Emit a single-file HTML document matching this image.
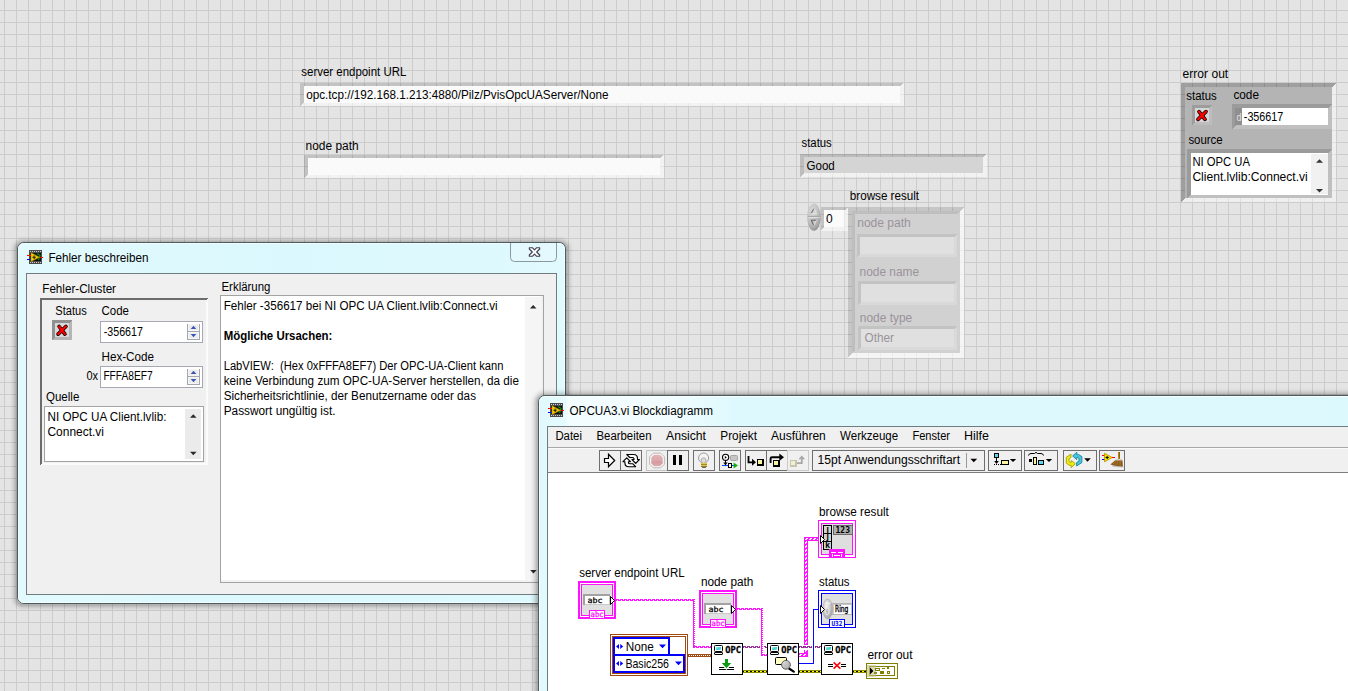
<!DOCTYPE html>
<html lang="de">
<head>
<meta charset="utf-8">
<title>OPCUA3.vi</title>
<style>
html,body{margin:0;padding:0;background:#e4e4e4;overflow:hidden}
svg{display:block;font-family:"Liberation Sans",sans-serif;shape-rendering:crispEdges}
text{white-space:pre}
</style>
</head>
<body>
<svg width="1348" height="691" viewBox="0 0 1348 691">
<g id="front-panel">
<defs><pattern id="grid" x="4" y="10" width="12" height="12" patternUnits="userSpaceOnUse"><rect x="0" y="0" width="12" height="12" fill="#e4e4e4"/><rect x="0" y="0" width="1" height="12" fill="#cccccc"/><rect x="0" y="0" width="12" height="1" fill="#cccccc"/></pattern></defs>
<rect x="0" y="0" width="1348" height="691" fill="url(#grid)"/>
<text x="301.3" y="76" font-size="12" fill="#000" textLength="105" lengthAdjust="spacingAndGlyphs" >server endpoint URL</text>
<path fill="#000" fill-opacity="0.145" d="M300 83H904L900 86H304V103L300 106Z"/>
<path fill="#fff" fill-opacity="0.52" d="M904 106H300L304 103H900V86L904 83Z"/>
<rect x="304" y="86" width="596" height="17" fill="#fafafa" />
<text x="306.2" y="99" font-size="12" fill="#000" textLength="302.3" lengthAdjust="spacingAndGlyphs" >opc.tcp://192.168.1.213:4880/Pilz/PvisOpcUAServer/None</text>
<text x="305.5" y="150" font-size="12" fill="#000" textLength="53.2" lengthAdjust="spacingAndGlyphs" >node path</text>
<path fill="#000" fill-opacity="0.145" d="M304 155H664L660 158H308V175L304 178Z"/>
<path fill="#fff" fill-opacity="0.52" d="M664 178H304L308 175H660V158L664 155Z"/>
<rect x="308" y="158" width="352" height="17" fill="#fafafa" />
<text x="801.5" y="147" font-size="12" fill="#000" textLength="30.3" lengthAdjust="spacingAndGlyphs" >status</text>
<path fill="#000" fill-opacity="0.17" d="M800 154H987L983 157H804V173L800 177Z"/>
<path fill="#fff" fill-opacity="0.5" d="M987 177H800L804 173H983V157L987 154Z"/>
<rect x="804" y="157" width="179" height="16" fill="#d4d4d4" />
<text x="806.5" y="169.5" font-size="12" fill="#000" textLength="28.3" lengthAdjust="spacingAndGlyphs" >Good</text>
<text x="849.8" y="200" font-size="12" fill="#000" textLength="69.3" lengthAdjust="spacingAndGlyphs" >browse result</text>
<path fill="#000" fill-opacity="0.145" d="M821 207H848L845 210H824V227L821 231Z"/>
<path fill="#fff" fill-opacity="0.52" d="M848 231H821L824 227H845V210L848 207Z"/>
<rect x="844" y="210" width="1" height="17" fill="#fff" fill-opacity="0.52"/>
<rect x="824" y="210" width="20" height="17" fill="#fbfbfb" />
<text x="826" y="222.5" font-size="12" fill="#000" >0</text>
<defs><radialGradient id="dial" cx="0.38" cy="0.3" r="0.75"><stop offset="0" stop-color="#dadada"/><stop offset="0.55" stop-color="#c2c2c2"/><stop offset="0.85" stop-color="#a4a4a4"/><stop offset="1" stop-color="#8a8a8a"/></radialGradient></defs>
<ellipse cx="813.9" cy="217.1" rx="6.8" ry="13.6" fill="url(#dial)" shape-rendering="geometricPrecision"/>
<path d="M808 216.4H820" stroke="#9a9a9a" stroke-width="0.9" shape-rendering="geometricPrecision"/>
<path d="M808 217.4H820" stroke="#e2e2e2" stroke-width="0.9" shape-rendering="geometricPrecision"/>
<path d="M811.2 213.6L813.8 208.6" stroke="#5a5a5a" stroke-width="1" fill="none" shape-rendering="geometricPrecision"/>
<path d="M813.8 208.6L816.6 213.6H811.2" stroke="#e6e6e6" stroke-width="0.9" fill="none" shape-rendering="geometricPrecision"/>
<path d="M816.4 220.2H811.2L813.8 225.6" stroke="#5a5a5a" stroke-width="1" fill="none" shape-rendering="geometricPrecision"/>
<path d="M813.8 225.6L816.4 220.2" stroke="#e6e6e6" stroke-width="0.9" fill="none" shape-rendering="geometricPrecision"/>
<path fill="#000" fill-opacity="0.13" d="M848 207H964L960 211H852V353L848 358Z"/>
<path fill="#fff" fill-opacity="0.62" d="M964 358H848L852 353H960V211L964 207Z"/>
<rect x="852" y="211" width="108" height="142" fill="#d1d1d1" />
<path fill="#bebebe"  d="M852 211H960L957 214H855V350L852 353Z"/>
<path fill="#d1d1d1"  d="M960 353H852L855 350H957V214L960 211Z"/>
<text x="857.2" y="227" font-size="12" fill="#9a939a" textLength="53.6" lengthAdjust="spacingAndGlyphs" >node path</text>
<path fill="#c3c3c3"  d="M857 234H957L954 237H860V254L857 257Z"/>
<path fill="#d9d9d9"  d="M957 257H857L860 254H954V237L957 234Z"/>
<rect x="860" y="237" width="94" height="17" fill="#e0e0e0" />
<text x="859.6" y="275.5" font-size="12" fill="#9a939a" textLength="59.5" lengthAdjust="spacingAndGlyphs" >node name</text>
<path fill="#c3c3c3"  d="M858 281H957L954 284H861V302L858 305Z"/>
<path fill="#d9d9d9"  d="M957 305H858L861 302H954V284L957 281Z"/>
<rect x="861" y="284" width="93" height="18" fill="#e0e0e0" />
<text x="859.8" y="321.6" font-size="12" fill="#9a939a" textLength="52.4" lengthAdjust="spacingAndGlyphs" >node type</text>
<path fill="#c3c3c3"  d="M858 326H957L954 329H861V347L858 350Z"/>
<path fill="#d9d9d9"  d="M957 350H858L861 347H954V329L957 326Z"/>
<rect x="861" y="329" width="93" height="18" fill="#e0e0e0" />
<text x="864.6" y="341.6" font-size="12" fill="#9a939a" textLength="29.4" lengthAdjust="spacingAndGlyphs" >Other</text>
<text x="1182.6" y="78" font-size="12" fill="#000" textLength="45.6" lengthAdjust="spacingAndGlyphs" >error out</text>
<path fill="#000" fill-opacity="0.3" d="M1181 83H1336L1332 87H1185V198L1181 202Z"/>
<path fill="#fff" fill-opacity="0.4" d="M1336 202H1181L1185 198H1332V87L1336 83Z"/>
<rect x="1185" y="87" width="147" height="111" fill="#b4b4b4" />
<text x="1186.3" y="99.8" font-size="12" fill="#000" textLength="30.4" lengthAdjust="spacingAndGlyphs" >status</text>
<text x="1233.4" y="98.8" font-size="12" fill="#000" textLength="25.6" lengthAdjust="spacingAndGlyphs" >code</text>
<path fill="#9d9d9d"  d="M1192 105H1212L1209 108H1195V122L1192 125Z"/>
<path fill="#bdbdbd"  d="M1212 125H1192L1195 122H1209V108L1212 105Z"/>
<rect x="1195" y="108" width="14" height="14" fill="#d7d7d7" />
<path d="M1199.0 111.6L1205.0 119.4M1206.0 111.6L1198.0 119.4" fill="none" stroke="#000" stroke-width="3.7" stroke-linecap="round" shape-rendering="geometricPrecision"/>
<path d="M1199.0 111.6L1205.0 119.4M1206.0 111.6L1198.0 119.4" fill="none" stroke="#ff0000" stroke-width="2.2" stroke-linecap="round" shape-rendering="geometricPrecision"/>
<path fill="#9b9b9b"  d="M1232 104H1332L1328 108H1236V125L1232 129Z"/>
<path fill="#c0c0c0"  d="M1332 129H1232L1236 125H1328V108L1332 104Z"/>
<rect x="1235" y="108" width="7" height="17" fill="#8f8f8f" />
<text x="1236.6" y="120.8" font-size="11" fill="#e2e2e2" textLength="5" lengthAdjust="spacingAndGlyphs" >d</text>
<rect x="1242" y="108" width="86" height="17" fill="#ffffff" />
<text x="1243.8" y="121" font-size="12" fill="#000" textLength="39.5" lengthAdjust="spacingAndGlyphs" >-356617</text>
<text x="1188.4" y="143.8" font-size="12" fill="#000" textLength="34.3" lengthAdjust="spacingAndGlyphs" >source</text>
<path fill="#9b9b9b"  d="M1187 149H1332L1328 153H1191V194L1187 198Z"/>
<path fill="#c0c0c0"  d="M1332 198H1187L1191 194H1328V153L1332 149Z"/>
<rect x="1191" y="153" width="137" height="42" fill="#ffffff" />
<rect x="1311" y="154" width="17" height="40" fill="#f1f1f1" />
<text x="1192.4" y="165.8" font-size="12" fill="#000" textLength="57.5" lengthAdjust="spacingAndGlyphs" >NI OPC UA</text>
<text x="1192.4" y="180.6" font-size="12" fill="#000" textLength="115.4" lengthAdjust="spacingAndGlyphs" >Client.lvlib:Connect.vi</text>
<path d="M1316.0 162.75L1319.5 159.25L1323.0 162.75Z" fill="#333" shape-rendering="geometricPrecision"/>
<path d="M1316.0 189.05L1319.5 192.55L1323.0 189.05Z" fill="#333" shape-rendering="geometricPrecision"/>
</g>
<g id="dialog-fehler-beschreiben">
<rect x="16.5" y="242.5" width="550" height="362" rx="7" fill="none" stroke="#000" stroke-opacity="0.2" stroke-width="1.5" shape-rendering="geometricPrecision"/>
<rect x="15.5" y="241.5" width="552" height="364" rx="8" fill="none" stroke="#000" stroke-opacity="0.14" stroke-width="1.5" shape-rendering="geometricPrecision"/>
<rect x="14.5" y="240.5" width="554" height="366" rx="9" fill="none" stroke="#000" stroke-opacity="0.1" stroke-width="1.5" shape-rendering="geometricPrecision"/>
<rect x="13.5" y="239.5" width="556" height="368" rx="10" fill="none" stroke="#000" stroke-opacity="0.065" stroke-width="1.5" shape-rendering="geometricPrecision"/>
<rect x="12.5" y="238.5" width="558" height="370" rx="11" fill="none" stroke="#000" stroke-opacity="0.04" stroke-width="1.5" shape-rendering="geometricPrecision"/>
<rect x="11.5" y="237.5" width="560" height="372" rx="12" fill="none" stroke="#000" stroke-opacity="0.022" stroke-width="1.5" shape-rendering="geometricPrecision"/>
<rect x="10.5" y="236.5" width="562" height="374" rx="13" fill="none" stroke="#000" stroke-opacity="0.01" stroke-width="1.5" shape-rendering="geometricPrecision"/>
<defs><linearGradient id="w1g" x1="0" y1="0" x2="1" y2="0"><stop offset="0" stop-color="#e2fafe"/><stop offset="0.5" stop-color="#daf8fd"/><stop offset="1" stop-color="#e0fafe"/></linearGradient></defs>
<rect x="17.5" y="242.5" width="548" height="361" rx="6.5" fill="url(#w1g)" stroke="#4e5b5f" stroke-width="1" shape-rendering="geometricPrecision"/>
<rect x="18.5" y="243.5" width="546" height="359" rx="5.5" fill="none" stroke="#f4fdff" stroke-opacity="0.9" stroke-width="1" shape-rendering="geometricPrecision"/>
<path d="M510.5 243V257.5Q510.5 261.5 514.5 261.5H552.5Q556.5 261.5 556.5 257.5V243" fill="#e3f9fd" stroke="#8b989c" stroke-width="1" shape-rendering="geometricPrecision"/>
<path d="M529.3 247.8h3.3l1.9 2.1l1.9-2.1h3.3v1.2l-3 3l3 3v1.2h-3.3l-1.9-2.1l-1.9 2.1h-3.3v-1.2l3-3l-3-3z" fill="#fafafa" stroke="#3e3e52" stroke-width="1.1" stroke-linejoin="round" shape-rendering="geometricPrecision"/>
<rect x="29" y="250" width="13" height="14" fill="#4a4a4a" />
<rect x="30" y="253" width="11" height="8" fill="#101010" />
<rect x="30" y="251" width="1" height="1" fill="#d0d0d0" />
<rect x="30" y="262" width="1" height="1" fill="#d0d0d0" />
<rect x="32" y="251" width="1" height="1" fill="#d0d0d0" />
<rect x="32" y="262" width="1" height="1" fill="#d0d0d0" />
<rect x="34" y="251" width="1" height="1" fill="#d0d0d0" />
<rect x="34" y="262" width="1" height="1" fill="#d0d0d0" />
<rect x="36" y="251" width="1" height="1" fill="#d0d0d0" />
<rect x="36" y="262" width="1" height="1" fill="#d0d0d0" />
<rect x="38" y="251" width="1" height="1" fill="#d0d0d0" />
<rect x="38" y="262" width="1" height="1" fill="#d0d0d0" />
<rect x="40" y="251" width="1" height="1" fill="#d0d0d0" />
<rect x="40" y="262" width="1" height="1" fill="#d0d0d0" />
<rect x="27" y="255" width="4" height="1" fill="#ff0000" />
<rect x="27" y="259" width="4" height="1" fill="#0000ff" />
<rect x="39" y="257" width="4" height="1" fill="#ff0000" />
<path d="M37 253.5L40 255.5L38.5 260" fill="none" stroke="#109010" stroke-width="1.2" shape-rendering="geometricPrecision"/>
<path d="M31 252.8L39.5 257.2L31 261.5Z" fill="#f4d000" stroke="#b09000" stroke-width="0.6" shape-rendering="geometricPrecision"/>
<path d="M32.4 257.2H35.8M34.1 255.5V258.9" stroke="#202020" stroke-width="1.1" shape-rendering="geometricPrecision"/>
<text x="48.4" y="262" font-size="12" fill="#000" textLength="100" lengthAdjust="spacingAndGlyphs" >Fehler beschreiben</text>
<rect x="26" y="273" width="531" height="322" fill="#6f7c80" />
<rect x="27" y="274" width="529" height="320" fill="#f0f0f0" />
<text x="42.3" y="293" font-size="12" fill="#000" textLength="73.7" lengthAdjust="spacingAndGlyphs" >Fehler-Cluster</text>
<path fill="#6c6c6c"  d="M40 298H208L206 300H42V463L40 465Z"/>
<path fill="#fbfbfb"  d="M208 465H40L42 463H206V300L208 298Z"/>
<rect x="42" y="300" width="164" height="163" fill="#f0f0f0" />
<text x="55.3" y="315" font-size="12" fill="#000" textLength="31.4" lengthAdjust="spacingAndGlyphs" >Status</text>
<text x="101.6" y="315" font-size="12" fill="#000" textLength="27.4" lengthAdjust="spacingAndGlyphs" >Code</text>
<path fill="#909090"  d="M52 320H72L69 323H55V337L52 340Z"/>
<path fill="#b5b5b5"  d="M72 340H52L55 337H69V323L72 320Z"/>
<rect x="55" y="323" width="14" height="14" fill="#d9d9d9" />
<path d="M59.1 326.50000000000006L64.9 334.09999999999997M65.9 326.50000000000006L58.1 334.09999999999997" fill="none" stroke="#000" stroke-width="3.7" stroke-linecap="round" shape-rendering="geometricPrecision"/>
<path d="M59.1 326.50000000000006L64.9 334.09999999999997M65.9 326.50000000000006L58.1 334.09999999999997" fill="none" stroke="#ff0000" stroke-width="2.2" stroke-linecap="round" shape-rendering="geometricPrecision"/>
<rect x="100" y="321" width="103" height="22" fill="#a6a8b4" />
<rect x="101" y="322" width="101" height="20" fill="#ffffff" />
<text x="103.8" y="336" font-size="12" fill="#000" textLength="39.1" lengthAdjust="spacingAndGlyphs" >-356617</text>
<rect x="187" y="324" width="13" height="16" fill="#a3a7af" />
<rect x="188" y="324" width="11" height="7" fill="#f6f6f6" />
<rect x="188" y="332" width="11" height="7" fill="#f6f6f6" />
<rect x="189" y="325" width="9" height="5" fill="#ececec" />
<rect x="189" y="333" width="9" height="5" fill="#ececec" />
<path d="M190.7 329.0L193.5 325.79999999999995L196.3 329.0Z" fill="#3a55b4" shape-rendering="geometricPrecision"/>
<path d="M190.7 334.0L193.5 337.20000000000005L196.3 334.0Z" fill="#3a55b4" shape-rendering="geometricPrecision"/>
<text x="101.5" y="361" font-size="12" fill="#000" textLength="52.5" lengthAdjust="spacingAndGlyphs" >Hex-Code</text>
<text x="86.4" y="380" font-size="12" fill="#000" textLength="11.6" lengthAdjust="spacingAndGlyphs" >0x</text>
<rect x="100" y="366" width="103" height="22" fill="#a6a8b4" />
<rect x="101" y="367" width="101" height="20" fill="#ffffff" />
<text x="103.4" y="380" font-size="12" fill="#000" textLength="49.2" lengthAdjust="spacingAndGlyphs" >FFFA8EF7</text>
<rect x="187" y="369" width="13" height="16" fill="#a3a7af" />
<rect x="188" y="369" width="11" height="7" fill="#f6f6f6" />
<rect x="188" y="377" width="11" height="7" fill="#f6f6f6" />
<rect x="189" y="370" width="9" height="5" fill="#ececec" />
<rect x="189" y="378" width="9" height="5" fill="#ececec" />
<path d="M190.7 374.0L193.5 370.79999999999995L196.3 374.0Z" fill="#3a55b4" shape-rendering="geometricPrecision"/>
<path d="M190.7 379.0L193.5 382.20000000000005L196.3 379.0Z" fill="#3a55b4" shape-rendering="geometricPrecision"/>
<text x="46" y="400.6" font-size="12" fill="#000" textLength="33.3" lengthAdjust="spacingAndGlyphs" >Quelle</text>
<rect x="44" y="406" width="160" height="56" fill="#a3a3a3" />
<rect x="45" y="407" width="158" height="54" fill="#ffffff" />
<rect x="185" y="409" width="16" height="50" fill="#ebebeb" />
<text x="47.5" y="420.5" font-size="12" fill="#000" textLength="118.9" lengthAdjust="spacingAndGlyphs" >NI OPC UA Client.lvlib:</text>
<text x="47.5" y="435.5" font-size="12" fill="#000" textLength="56.4" lengthAdjust="spacingAndGlyphs" >Connect.vi</text>
<path d="M190.0 417.7L193.3 414.3L196.60000000000002 417.7Z" fill="#2a2a2a" shape-rendering="geometricPrecision"/>
<path d="M190.0 451.8L193.3 455.2L196.60000000000002 451.8Z" fill="#2a2a2a" shape-rendering="geometricPrecision"/>
<text x="221.5" y="290.6" font-size="12" fill="#000" textLength="48.9" lengthAdjust="spacingAndGlyphs" >Erklärung</text>
<rect x="220" y="295" width="324" height="288" fill="#a3a3a3" />
<rect x="221" y="296" width="322" height="286" fill="#f2f2f2" />
<rect x="221" y="296" width="320" height="284" fill="#ffffff" />
<rect x="525" y="297" width="16" height="283" fill="#f5f5f5" />
<path d="M529.9000000000001 308.5L533.2 305.1L536.5 308.5Z" fill="#2a2a2a" shape-rendering="geometricPrecision"/>
<path d="M530.1 570.0999999999999L533.4 573.5L536.6999999999999 570.0999999999999Z" fill="#2a2a2a" shape-rendering="geometricPrecision"/>
<text x="223.7" y="310" font-size="12" fill="#000" textLength="274" lengthAdjust="spacingAndGlyphs" >Fehler -356617 bei NI OPC UA Client.lvlib:Connect.vi</text>
<text x="223.7" y="340" font-size="12" fill="#000" textLength="108.6" lengthAdjust="spacingAndGlyphs" font-weight="bold" >Mögliche Ursachen:</text>
<text x="223.7" y="370" font-size="12" fill="#000" textLength="279.7" lengthAdjust="spacingAndGlyphs" xml:space="preserve">LabVIEW:  (Hex 0xFFFA8EF7) Der OPC-UA-Client kann</text>
<text x="223.7" y="385" font-size="12" fill="#000" textLength="295.3" lengthAdjust="spacingAndGlyphs" >keine Verbindung zum OPC-UA-Server herstellen, da die</text>
<text x="223.7" y="400" font-size="12" fill="#000" textLength="252.3" lengthAdjust="spacingAndGlyphs" >Sicherheitsrichtlinie, der Benutzername oder das</text>
<text x="223.7" y="415" font-size="12" fill="#000" textLength="111.8" lengthAdjust="spacingAndGlyphs" >Passwort ungültig ist.</text>
</g>
<g id="window-blockdiagramm">
<rect x="537.5" y="395.5" width="900" height="400" rx="7" fill="none" stroke="#000" stroke-opacity="0.22" stroke-width="1.5" shape-rendering="geometricPrecision"/>
<rect x="536.5" y="394.5" width="900" height="400" rx="8" fill="none" stroke="#000" stroke-opacity="0.16" stroke-width="1.5" shape-rendering="geometricPrecision"/>
<rect x="535.5" y="393.5" width="900" height="400" rx="9" fill="none" stroke="#000" stroke-opacity="0.115" stroke-width="1.5" shape-rendering="geometricPrecision"/>
<rect x="534.5" y="392.5" width="900" height="400" rx="10" fill="none" stroke="#000" stroke-opacity="0.08" stroke-width="1.5" shape-rendering="geometricPrecision"/>
<rect x="533.5" y="391.5" width="900" height="400" rx="11" fill="none" stroke="#000" stroke-opacity="0.05" stroke-width="1.5" shape-rendering="geometricPrecision"/>
<rect x="532.5" y="390.5" width="900" height="400" rx="12" fill="none" stroke="#000" stroke-opacity="0.03" stroke-width="1.5" shape-rendering="geometricPrecision"/>
<rect x="531.5" y="389.5" width="900" height="400" rx="13" fill="none" stroke="#000" stroke-opacity="0.015" stroke-width="1.5" shape-rendering="geometricPrecision"/>
<rect x="530.5" y="388.5" width="900" height="400" rx="14" fill="none" stroke="#000" stroke-opacity="0.008" stroke-width="1.5" shape-rendering="geometricPrecision"/>
<defs><linearGradient id="w2g" x1="0" y1="0" x2="1" y2="0"><stop offset="0" stop-color="#e0f9fd"/><stop offset="0.029" stop-color="#e4fafe"/><stop offset="0.033" stop-color="#f3fcff"/><stop offset="0.15" stop-color="#f1fcff"/><stop offset="0.215" stop-color="#def9fd"/><stop offset="1" stop-color="#dbf8fd"/></linearGradient></defs>
<rect x="538.5" y="395.5" width="900" height="400" rx="6.5" fill="url(#w2g)" stroke="#4e5b5f" stroke-width="1" shape-rendering="geometricPrecision"/>
<rect x="539.5" y="396.5" width="900" height="400" rx="5.5" fill="none" stroke="#fbffff" stroke-opacity="0.9" stroke-width="1" shape-rendering="geometricPrecision"/>
<rect x="550" y="403" width="13" height="14" fill="#4a4a4a" />
<rect x="551" y="406" width="11" height="8" fill="#101010" />
<rect x="551" y="404" width="1" height="1" fill="#d0d0d0" />
<rect x="551" y="415" width="1" height="1" fill="#d0d0d0" />
<rect x="553" y="404" width="1" height="1" fill="#d0d0d0" />
<rect x="553" y="415" width="1" height="1" fill="#d0d0d0" />
<rect x="555" y="404" width="1" height="1" fill="#d0d0d0" />
<rect x="555" y="415" width="1" height="1" fill="#d0d0d0" />
<rect x="557" y="404" width="1" height="1" fill="#d0d0d0" />
<rect x="557" y="415" width="1" height="1" fill="#d0d0d0" />
<rect x="559" y="404" width="1" height="1" fill="#d0d0d0" />
<rect x="559" y="415" width="1" height="1" fill="#d0d0d0" />
<rect x="561" y="404" width="1" height="1" fill="#d0d0d0" />
<rect x="561" y="415" width="1" height="1" fill="#d0d0d0" />
<rect x="548" y="408" width="4" height="1" fill="#ff0000" />
<rect x="548" y="412" width="4" height="1" fill="#0000ff" />
<rect x="560" y="410" width="4" height="1" fill="#ff0000" />
<path d="M558 406.5L561 408.5L559.5 413" fill="none" stroke="#109010" stroke-width="1.2" shape-rendering="geometricPrecision"/>
<path d="M552 405.8L560.5 410.2L552 414.5Z" fill="#f4d000" stroke="#b09000" stroke-width="0.6" shape-rendering="geometricPrecision"/>
<path d="M553.4 410.2H556.8M555.1 408.5V411.9" stroke="#202020" stroke-width="1.1" shape-rendering="geometricPrecision"/>
<text x="569.5" y="414.6" font-size="12" fill="#000" textLength="143.5" lengthAdjust="spacingAndGlyphs" >OPCUA3.vi Blockdiagramm</text>
<rect x="547" y="426" width="801" height="265" fill="#6f7c80" />
<rect x="548" y="427" width="800" height="264" fill="#ffffff" />
<rect x="548" y="427" width="800" height="20" fill="#f0f0f0" />
<rect x="548" y="447" width="800" height="1" fill="#a8a8a8" />
<rect x="548" y="448" width="800" height="1" fill="#fafafa" />
<text x="555.4" y="439.5" font-size="12" fill="#000" textLength="26.6" lengthAdjust="spacingAndGlyphs" >Datei</text>
<text x="596.5" y="439.5" font-size="12" fill="#000" textLength="55" lengthAdjust="spacingAndGlyphs" >Bearbeiten</text>
<text x="666" y="439.5" font-size="12" fill="#000" textLength="40" lengthAdjust="spacingAndGlyphs" >Ansicht</text>
<text x="720.3" y="439.5" font-size="12" fill="#000" textLength="36.7" lengthAdjust="spacingAndGlyphs" >Projekt</text>
<text x="771.1" y="439.5" font-size="12" fill="#000" textLength="54.7" lengthAdjust="spacingAndGlyphs" >Ausführen</text>
<text x="840.1" y="439.5" font-size="12" fill="#000" textLength="58.1" lengthAdjust="spacingAndGlyphs" >Werkzeuge</text>
<text x="912.4" y="439.5" font-size="12" fill="#000" textLength="37.6" lengthAdjust="spacingAndGlyphs" >Fenster</text>
<text x="964" y="439.5" font-size="12" fill="#000" textLength="25" lengthAdjust="spacingAndGlyphs" >Hilfe</text>
<rect x="548" y="449" width="800" height="23" fill="#f0f0f0" />
<rect x="548" y="472" width="800" height="1" fill="#7c7c7c" />
<path fill="#6e6e6e" fill-rule="evenodd" d="M599 450H621V471H599Z M600 451V470H620V451Z"/>
<path fill="#6e6e6e" fill-rule="evenodd" d="M620 450H642V471H620Z M621 451V470H641V451Z"/>
<path d="M604.5 458.5H608.5V454.3L614.7 460.5L608.5 466.7V462.5H604.5Z" fill="#fff" stroke="#000" stroke-width="1.2" shape-rendering="geometricPrecision" stroke-linejoin="miter"/>
<path d="M626.8 454.5H633.5Q637.5 454.5 637.5 458.5V459.5H639.4L635.7 463.4L632 459.5H634V458.8Q634 457.5 632.5 457.5H629.8Z" fill="#fff" stroke="#000" stroke-width="1.15" shape-rendering="geometricPrecision" stroke-linejoin="round"/>
<path d="M626.8 454.5H633.5Q637.5 454.5 637.5 458.5V459.5H639.4L635.7 463.4L632 459.5H634V458.8Q634 457.5 632.5 457.5H629.8Z" fill="#fff" stroke="#000" stroke-width="1.15" shape-rendering="geometricPrecision" stroke-linejoin="round" transform="rotate(180 631.2 460.6)"/>
<path fill="#c3c3c3" fill-rule="evenodd" d="M646 450H668V471H646Z M647 451V470H667V451Z"/>
<path fill="#6e6e6e" fill-rule="evenodd" d="M667 450H689V471H667Z M668 451V470H688V451Z"/>
<path d="M653.3 453.2H660.7L664.3 456.8V464.2L660.7 467.8H653.3L649.7 464.2V456.8Z" fill="#fff" stroke="#b4b4b4" stroke-width="1" shape-rendering="geometricPrecision"/>
<defs><linearGradient id="abg" x1="0" y1="0" x2="0" y2="1"><stop offset="0" stop-color="#e2b4b6"/><stop offset="0.5" stop-color="#dba8aa"/><stop offset="0.55" stop-color="#d49a9d"/><stop offset="1" stop-color="#dcaaac"/></linearGradient></defs>
<path d="M653.9 454.8H660.1L662.7 457.4V463.6L660.1 466.2H653.9L651.3 463.6V457.4Z" fill="url(#abg)" shape-rendering="geometricPrecision"/>
<rect x="673" y="455" width="3" height="10" fill="#000" />
<rect x="679" y="455" width="3" height="10" fill="#000" />
<path fill="#6e6e6e" fill-rule="evenodd" d="M693 450H715V471H693Z M694 451V470H714V451Z"/>
<circle cx="703.6" cy="458" r="5" fill="#f4f4f4" stroke="#9a9a9a" stroke-width="1" shape-rendering="geometricPrecision"/>
<path d="M701.4 462.2V459L702.3 458H704.9L705.8 459V462.2" fill="#dcdcdc" stroke="#a8a8a8" stroke-width="0.9" shape-rendering="geometricPrecision"/>
<rect x="701" y="463" width="6" height="1" fill="#e8c838" />
<rect x="701" y="464" width="6" height="1" fill="#a08a30" />
<rect x="701" y="465" width="6" height="1" fill="#e8c838" />
<rect x="701" y="466" width="6" height="1" fill="#8c7a34" />
<rect x="702" y="467" width="4" height="1" fill="#6c6c6c" />
<path fill="#6e6e6e" fill-rule="evenodd" d="M719 450H741V471H719Z M720 451V470H740V451Z"/>
<circle cx="725.6" cy="457.3" r="3.1" fill="#fff" stroke="#000" stroke-width="1.1" shape-rendering="geometricPrecision"/>
<path d="M724.8 455.9L726.9 457.3L724.8 458.7Z" fill="#000" shape-rendering="geometricPrecision"/>
<rect x="725" y="460" width="1" height="5" fill="#000" />
<path d="M723.3 462.6L725.5 465.2L727.7 462.6Z" fill="#000" shape-rendering="geometricPrecision"/>
<rect x="730.5" y="455.5" width="7" height="5" rx="1" fill="#c6c6c6" stroke="#a4a4a4" stroke-width="1" shape-rendering="geometricPrecision"/>
<rect x="722" y="465" width="13" height="1" fill="#1040ff" />
<rect x="728" y="463" width="4" height="5" fill="#000" />
<rect x="729" y="464" width="2" height="3" fill="#fff" />
<path d="M733.6 462.4L738 465.4L733.6 468.4Z" fill="#10b010" shape-rendering="geometricPrecision"/>
<path fill="#6e6e6e" fill-rule="evenodd" d="M745 450H767V471H745Z M746 451V470H766V451Z"/>
<path fill="#6e6e6e" fill-rule="evenodd" d="M766 450H788V471H766Z M767 451V470H787V451Z"/>
<path fill="#c9c9c9" fill-rule="evenodd" d="M787 450H809V471H787Z M788 451V470H808V451Z"/>
<path d="M748.5 456V462.3H753" fill="none" stroke="#000" stroke-width="1.8" shape-rendering="geometricPrecision"/>
<path d="M752 458.8L756 462.3L752 465.8Z" fill="#000" shape-rendering="geometricPrecision"/>
<rect x="757" y="459" width="7" height="7" fill="#000" />
<rect x="758" y="460" width="4" height="4" fill="#f8f4a0" />
<path d="M770.6 463V458.6Q770.6 457.2 772 457.2H780" fill="none" stroke="#000" stroke-width="1.9" shape-rendering="geometricPrecision"/>
<path d="M779.3 453.4L784 457.2L779.3 461Z" fill="#000" shape-rendering="geometricPrecision"/>
<rect x="773" y="460" width="7" height="7" fill="#000" />
<rect x="774" y="461" width="4" height="4" fill="#f8f4a0" />
<rect x="790" y="460" width="7" height="7" fill="#c4c4b0" />
<rect x="791" y="461" width="4" height="4" fill="#f0f0cc" />
<path d="M797 463.2H801.8V458.5" fill="none" stroke="#a8a8a8" stroke-width="1.8" shape-rendering="geometricPrecision"/>
<path d="M798.4 459.2L801.8 455.4L805.2 459.2Z" fill="#a8a8a8" shape-rendering="geometricPrecision"/>
<path fill="#6e6e6e" fill-rule="evenodd" d="M812 450H985V471H812Z M813 451V470H984V451Z"/>
<text x="817.6" y="463.7" font-size="12" fill="#000" textLength="142.4" lengthAdjust="spacingAndGlyphs" >15pt Anwendungsschriftart</text>
<rect x="966" y="453" width="1" height="15" fill="#9a9a9a" />
<path d="M970.4 458.8L973.8 462.2L977.1999999999999 458.8Z" fill="#000" shape-rendering="geometricPrecision"/>
<path fill="#6e6e6e" fill-rule="evenodd" d="M988 450H1022V471H988Z M989 451V470H1021V451Z"/>
<rect x="994" y="453" width="5" height="5" fill="#000" />
<rect x="995" y="454" width="3" height="3" fill="#58d8f0" />
<rect x="996" y="458" width="1" height="5" fill="#000" />
<path d="M994.2 461L996.5 464L998.8 461Z" fill="#000" shape-rendering="geometricPrecision"/>
<rect x="994" y="464" width="1" height="1" fill="#000" />
<rect x="996" y="464" width="1" height="1" fill="#000" />
<rect x="998" y="464" width="1" height="1" fill="#000" />
<rect x="1000" y="464" width="1" height="1" fill="#000" />
<rect x="1002" y="464" width="1" height="1" fill="#000" />
<rect x="1004" y="464" width="1" height="1" fill="#000" />
<rect x="1006" y="464" width="1" height="1" fill="#000" />
<rect x="1001" y="460" width="8" height="5" fill="#000" />
<rect x="1002" y="461" width="6" height="3" fill="#f8f4a0" />
<path d="M1009.8 458.9L1013 462.1L1016.2 458.9Z" fill="#000" shape-rendering="geometricPrecision"/>
<path fill="#6e6e6e" fill-rule="evenodd" d="M1024 450H1058V471H1024Z M1025 451V470H1057V451Z"/>
<path d="M1028.5 455.5Q1029 453.5 1031 453.5H1034.5L1036 452.3L1037.5 453.5H1041Q1043 453.5 1043.5 455.5" fill="none" stroke="#000" stroke-width="1" shape-rendering="geometricPrecision"/>
<rect x="1029" y="459" width="3" height="3" fill="#000" />
<rect x="1033" y="457" width="4" height="8" fill="#000" />
<rect x="1034" y="458" width="2" height="6" fill="#f8f4a0" />
<rect x="1038" y="460" width="6" height="5" fill="#000" />
<rect x="1039" y="461" width="4" height="3" fill="#58d8f0" />
<path d="M1045.8 458.9L1049 462.1L1052.2 458.9Z" fill="#000" shape-rendering="geometricPrecision"/>
<path fill="#6e6e6e" fill-rule="evenodd" d="M1063 450H1097V471H1063Z M1064 451V470H1096V451Z"/>
<path d="M1071 454.2L1066.3 457.2V463.2L1069.6 465.4H1071.2V467.8L1075.3 463.7L1071.2 460.4V462.4H1070.2L1069 461.4V458.8L1071 457.4Z" fill="#ecec10" stroke="#a4a400" stroke-width="0.9" shape-rendering="geometricPrecision" stroke-linejoin="round"/>
<path d="M1076.6 466L1081.9 462.6V456.6L1078.4 454.4H1076.8V452.2L1072.6 456L1076.8 459.6V457.4H1077.8L1079 458.4V461L1076.6 462.6Z" fill="#48c4dc" stroke="#1c869e" stroke-width="0.9" shape-rendering="geometricPrecision" stroke-linejoin="round"/>
<path d="M1084.2 458.2L1087.5 461.8L1090.8 458.2Z" fill="#000" shape-rendering="geometricPrecision"/>
<path fill="#6e6e6e" fill-rule="evenodd" d="M1099 450H1125V471H1099Z M1100 451V470H1124V451Z"/>
<rect x="1102" y="455" width="3" height="1" fill="#ff0000" />
<rect x="1102" y="459" width="3" height="1" fill="#0000ff" />
<path d="M1104.5 453.2L1112.3 457.5L1104.5 461.8Z" fill="#f4e000" stroke="#b09000" stroke-width="0.8" shape-rendering="geometricPrecision"/>
<path d="M1105.6 457.5H1108.8M1107.2 455.9V459.1" fill="none" stroke="#101010" stroke-width="1.1" shape-rendering="geometricPrecision"/>
<rect x="1112" y="457" width="3" height="1" fill="#ff0000" />
<path d="M1111 464L1116 459.5H1122L1123.4 467.6L1113 467Z" fill="#000" fill-opacity="0.18" shape-rendering="geometricPrecision"/>
<rect x="1118" y="452" width="2" height="7" fill="#b8860c" />
<rect x="1119" y="452" width="1" height="7" fill="#8a6408" />
<path d="M1115.6 458.8H1122L1122.4 460.4H1115Z" fill="#d8d4c8" shape-rendering="geometricPrecision"/>
<path d="M1115 460.4H1122.4L1122.8 466.4L1116.5 466L1110.4 464.6Z" fill="#8c5c1c" shape-rendering="geometricPrecision"/>
<path d="M1113 463.8L1116 461.5M1116.5 465L1118 461M1120 465.5L1120.3 461" fill="none" stroke="#c08030" stroke-width="0.7" shape-rendering="geometricPrecision"/>
<g id="block-diagram">
<rect x="804" y="537" width="4" height="120" fill="#ff12ff" />
<rect x="804" y="537" width="16" height="4" fill="#ff12ff" />
<rect x="799" y="653" width="9" height="4" fill="#ff12ff" />
<path d="M805.5 542V653" stroke="#fff" stroke-width="1" stroke-dasharray="2 2" fill="none" stroke-dashoffset="0"/>
<path d="M806.5 541V653" stroke="#fff" stroke-width="1" stroke-dasharray="2 2" fill="none" stroke-dashoffset="0"/>
<path d="M806 538.5H820" stroke="#fff" stroke-width="1" stroke-dasharray="2 2" fill="none"/>
<path d="M805 539.5H820" stroke="#fff" stroke-width="1" stroke-dasharray="2 2" fill="none"/>
<path d="M800 654.5H806" stroke="#fff" stroke-width="1" stroke-dasharray="2 2" fill="none"/>
<path d="M799 655.5H806" stroke="#fff" stroke-width="1" stroke-dasharray="2 2" fill="none"/>
<rect x="803" y="645" width="6" height="1" fill="#fff" />
<rect x="803" y="648" width="6" height="2" fill="#fff" />
<path d="M616 599.5H694" stroke="#ff12ff" stroke-width="1" stroke-dasharray="3 1" fill="none"/>
<path d="M616 600.5H694" stroke="#ff12ff" stroke-width="1" stroke-dasharray="3 1" stroke-dashoffset="2" fill="none"/>
<path d="M693.5 599V648" stroke="#ff12ff" stroke-width="1" fill="none"/>
<path d="M694.5 599V648" stroke="#ff12ff" stroke-width="1" stroke-dasharray="1 1" fill="none"/>
<path d="M694 646.5H711" stroke="#ff12ff" stroke-width="1" stroke-dasharray="3 1" fill="none"/>
<path d="M694 647.5H711" stroke="#ff12ff" stroke-width="1" stroke-dasharray="3 1" stroke-dashoffset="2" fill="none"/>
<path d="M743 646.5H767" stroke="#962c96" stroke-width="1" stroke-dasharray="3 1" fill="none"/>
<path d="M743 647.5H767" stroke="#962c96" stroke-width="1" stroke-dasharray="3 1" stroke-dashoffset="2" fill="none"/>
<rect x="760" y="645" width="4" height="4" fill="#fff" />
<path d="M799 646.5H821" stroke="#962c96" stroke-width="1" stroke-dasharray="3 1" fill="none"/>
<path d="M799 647.5H821" stroke="#962c96" stroke-width="1" stroke-dasharray="3 1" stroke-dashoffset="2" fill="none"/>
<rect x="812" y="645" width="3" height="4" fill="#fff" />
<path d="M737 608.5H762" stroke="#ff12ff" stroke-width="1" stroke-dasharray="3 1" fill="none"/>
<path d="M737 609.5H762" stroke="#ff12ff" stroke-width="1" stroke-dasharray="3 1" stroke-dashoffset="2" fill="none"/>
<path d="M761.5 608V656" stroke="#ff12ff" stroke-width="1" fill="none"/>
<path d="M762.5 608V656" stroke="#ff12ff" stroke-width="1" stroke-dasharray="1 1" fill="none"/>
<path d="M762 654.5H767" stroke="#ff12ff" stroke-width="1" stroke-dasharray="3 1" fill="none"/>
<path d="M762 655.5H767" stroke="#ff12ff" stroke-width="1" stroke-dasharray="3 1" stroke-dashoffset="2" fill="none"/>
<rect x="688" y="654" width="23" height="3" fill="#a24a12" />
<path d="M689 655.5H711" stroke="#fff" stroke-width="1" stroke-dasharray="1 1" fill="none"/>
<rect x="743" y="670" width="24" height="3" fill="#8a8a00" />
<rect x="743" y="671" width="24" height="1" fill="#000" />
<path d="M744 671.5H767" stroke="#ffff00" stroke-width="1" stroke-dasharray="2 2" fill="none"/>
<rect x="799" y="670" width="22" height="3" fill="#8a8a00" />
<rect x="799" y="671" width="22" height="1" fill="#000" />
<path d="M800 671.5H821" stroke="#ffff00" stroke-width="1" stroke-dasharray="2 2" fill="none"/>
<rect x="853" y="670" width="14" height="3" fill="#8a8a00" />
<rect x="853" y="671" width="14" height="1" fill="#000" />
<path d="M854 671.5H867" stroke="#ffff00" stroke-width="1" stroke-dasharray="2 2" fill="none"/>
<path d="M799 663.5H813.5V609.5H819" fill="none" stroke="#0808ff" stroke-width="1" />
<text x="579.2" y="577" font-size="12" fill="#000" textLength="105.4" lengthAdjust="spacingAndGlyphs" >server endpoint URL</text>
<text x="700.9" y="586" font-size="12" fill="#000" textLength="52.5" lengthAdjust="spacingAndGlyphs" >node path</text>
<text x="819" y="516" font-size="12" fill="#000" textLength="69.8" lengthAdjust="spacingAndGlyphs" >browse result</text>
<text x="819" y="586" font-size="12" fill="#000" textLength="30.5" lengthAdjust="spacingAndGlyphs" >status</text>
<text x="867.5" y="659" font-size="12" fill="#000" textLength="45" lengthAdjust="spacingAndGlyphs" >error out</text>
<rect x="578" y="581" width="38" height="38" fill="#ff12ff" />
<rect x="580" y="583" width="34" height="34" fill="#fff" />
<rect x="581" y="584" width="32" height="32" fill="#ff12ff" />
<rect x="582" y="585" width="30" height="30" fill="#e0e0e0" />
<rect x="583" y="594" width="27" height="11" fill="#a2a2a2" />
<rect x="585" y="604" width="25" height="1" fill="#cacaca" />
<rect x="609" y="596" width="1" height="9" fill="#c4c4c4" />
<rect x="585" y="596" width="24" height="8" fill="#fff" />
<text x="587.6" y="603" font-size="7.6" fill="#000" textLength="15" lengthAdjust="spacingAndGlyphs" font-family="'DejaVu Sans Mono','Liberation Mono',monospace" stroke="#000" stroke-width="0.25">abc</text>
<path d="M610.5 596.5L614.5 600.5L610.5 604.5Z" fill="#fff" stroke="#000" stroke-width="1" shape-rendering="geometricPrecision"/>
<rect x="589" y="610" width="16" height="9" fill="#ff12ff" />
<rect x="590" y="611" width="14" height="7" fill="#fff" />
<text x="590.6" y="617" font-size="7.6" fill="#ff12ff" textLength="13" lengthAdjust="spacingAndGlyphs" font-family="'DejaVu Sans Mono','Liberation Mono',monospace" stroke="#ff12ff" stroke-width="0.3">abc</text>
<rect x="699" y="590" width="38" height="38" fill="#ff12ff" />
<rect x="701" y="592" width="34" height="34" fill="#fff" />
<rect x="702" y="593" width="32" height="32" fill="#ff12ff" />
<rect x="703" y="594" width="30" height="30" fill="#e0e0e0" />
<rect x="704" y="603" width="27" height="11" fill="#a2a2a2" />
<rect x="706" y="613" width="25" height="1" fill="#cacaca" />
<rect x="730" y="605" width="1" height="9" fill="#c4c4c4" />
<rect x="706" y="605" width="24" height="8" fill="#fff" />
<text x="708.6" y="612" font-size="7.6" fill="#000" textLength="15" lengthAdjust="spacingAndGlyphs" font-family="'DejaVu Sans Mono','Liberation Mono',monospace" stroke="#000" stroke-width="0.25">abc</text>
<path d="M731.5 605.5L735.5 609.5L731.5 613.5Z" fill="#fff" stroke="#000" stroke-width="1" shape-rendering="geometricPrecision"/>
<rect x="710" y="619" width="16" height="9" fill="#ff12ff" />
<rect x="711" y="620" width="14" height="7" fill="#fff" />
<text x="711.6" y="626" font-size="7.6" fill="#ff12ff" textLength="13" lengthAdjust="spacingAndGlyphs" font-family="'DejaVu Sans Mono','Liberation Mono',monospace" stroke="#ff12ff" stroke-width="0.3">abc</text>
<rect x="818" y="520" width="38" height="38" fill="#ff12ff" />
<rect x="819" y="521" width="36" height="36" fill="#fff" />
<rect x="821" y="523" width="32" height="32" fill="#ff12ff" />
<rect x="822" y="524" width="30" height="30" fill="#dedede" />
<rect x="823" y="525" width="9" height="25" fill="#000" />
<rect x="824" y="526" width="7" height="7" fill="#d2d2d2" />
<text x="827.6" y="532.2" font-size="8.5" fill="#000" font-weight="bold" font-family="'Liberation Sans',sans-serif" text-anchor="middle" >i</text>
<rect x="824" y="534" width="7" height="7" fill="#d2d2d2" />
<text x="827.6" y="539.4000000000001" font-size="8.5" fill="#000" font-weight="bold" font-family="'Liberation Sans',sans-serif" text-anchor="middle" >j</text>
<rect x="824" y="542" width="7" height="7" fill="#d2d2d2" />
<text x="827.6" y="548.2" font-size="8.5" fill="#000" font-weight="bold" font-family="'Liberation Sans',sans-serif" text-anchor="middle" >k</text>
<rect x="833" y="525" width="20" height="10" fill="#6a6a6a" />
<rect x="834" y="526" width="18" height="8" fill="#b0b0b0" />
<text x="835.5" y="533" font-size="9" fill="#000" textLength="14.5" lengthAdjust="spacingAndGlyphs" font-weight="bold" font-family="'DejaVu Sans Mono','Liberation Mono',monospace" >123</text>
<path d="M820.5 535.5L824.5 539.5L820.5 543.5Z" fill="#fff" stroke="#000" stroke-width="1" shape-rendering="geometricPrecision"/>
<rect x="829" y="549" width="16" height="9" fill="#ff12ff" />
<path d="M831 552.5H836M838 552.5H843M832.5 554V557M841.5 554V557M834 555.5H840" fill="none" stroke="#fff" stroke-width="1" />
<rect x="818" y="590" width="38" height="38" fill="#0000ff" />
<rect x="819" y="591" width="36" height="36" fill="#fff" />
<rect x="821" y="593" width="32" height="32" fill="#0000ff" />
<rect x="822" y="594" width="30" height="30" fill="#e0e0e0" />
<defs><radialGradient id="rg" cx="0.4" cy="0.35" r="0.7"><stop offset="0" stop-color="#f4f4f4"/><stop offset="0.5" stop-color="#cfcfcf"/><stop offset="1" stop-color="#9c9c9c"/></radialGradient></defs>
<rect x="830" y="603" width="22" height="12" fill="#b4b4b4" />
<rect x="830" y="604" width="22" height="10" fill="#c6c6c6" />
<ellipse cx="827.6" cy="609" rx="4.8" ry="10" fill="url(#rg)" stroke="#a0a0a0" stroke-width="0.5" shape-rendering="geometricPrecision"/>
<ellipse cx="827.2" cy="611.5" rx="1.8" ry="3.2" fill="#bdbdbd" stroke="#f2f2f2" stroke-width="0.7" shape-rendering="geometricPrecision"/>
<path d="M825.5 602.5Q828 604 830.5 603" stroke="#fafafa" stroke-width="0.9" fill="none" shape-rendering="geometricPrecision"/>
<rect x="834" y="605" width="17" height="9" fill="#fff" />
<text x="835" y="611.8" font-size="8.2" fill="#000" textLength="13.4" lengthAdjust="spacingAndGlyphs" font-family="'DejaVu Sans','Liberation Sans',sans-serif" stroke="#000" stroke-width="0.35">Ring</text>
<path d="M820.5 605.5L824.5 609.5L820.5 613.5Z" fill="#fff" stroke="#000" stroke-width="1" shape-rendering="geometricPrecision"/>
<rect x="829" y="619" width="16" height="9" fill="#0000ff" />
<rect x="830" y="620" width="14" height="7" fill="#fff" />
<text x="831.4" y="625.9" font-size="7" fill="#0000ff" textLength="11" lengthAdjust="spacingAndGlyphs" font-weight="bold" font-family="'DejaVu Sans Mono','Liberation Mono',monospace" >U32</text>
<rect x="610" y="634" width="78" height="42" fill="#a24a12" />
<rect x="611" y="635" width="76" height="40" fill="#fff" />
<rect x="612" y="636" width="74" height="38" fill="#a24a12" />
<rect x="613" y="637" width="72" height="36" fill="#fff" />
<rect x="613" y="637" width="57" height="19" fill="#0000ff" />
<rect x="615" y="639" width="53" height="15" fill="#fff" />
<path d="M616 646.5L619 643.9V649.1Z M623.2 646.5L620.2 643.9V649.1Z" fill="#0000ff" shape-rendering="geometricPrecision"/>
<text x="625.8" y="651" font-size="13" fill="#000" textLength="28" lengthAdjust="spacingAndGlyphs" >None</text>
<path d="M659 644.4H666L662.5 648.2Z" fill="#0000ff" shape-rendering="geometricPrecision"/>
<rect x="613" y="654" width="72" height="19" fill="#0000ff" />
<rect x="615" y="656" width="68" height="15" fill="#fff" />
<path d="M616 663.5L619 660.9V666.1Z M623.2 663.5L620.2 660.9V666.1Z" fill="#0000ff" shape-rendering="geometricPrecision"/>
<text x="625.4" y="668" font-size="13" fill="#000" textLength="43.6" lengthAdjust="spacingAndGlyphs" >Basic256</text>
<path d="M675 661.4H682L678.5 665.2Z" fill="#0000ff" shape-rendering="geometricPrecision"/>
<rect x="711" y="643" width="32" height="32" fill="#000" />
<rect x="712" y="644" width="30" height="30" fill="#fff" />
<rect x="714.5" y="645.5" width="8" height="6" rx="1" fill="#fff" stroke="#000" stroke-width="1" shape-rendering="geometricPrecision"/>
<defs><linearGradient id="scr" x1="0" y1="0" x2="1" y2="1"><stop offset="0" stop-color="#b8f4f4"/><stop offset="0.55" stop-color="#30d0d0"/><stop offset="1" stop-color="#a0ecec"/></linearGradient></defs>
<rect x="716" y="647" width="5" height="3" fill="url(#scr)" />
<rect x="714.5" y="652.5" width="8" height="2" rx="0.5" fill="#fff" stroke="#000" stroke-width="1" shape-rendering="geometricPrecision"/>
<text x="725.3" y="653" font-size="9.5" fill="#000" textLength="15.8" lengthAdjust="spacingAndGlyphs" font-weight="bold" font-family="'DejaVu Sans Mono','Liberation Mono',monospace" stroke="#000" stroke-width="0.3">OPC</text>
<rect x="719" y="667" width="15" height="1" fill="#000" />
<rect x="719" y="669" width="15" height="1" fill="#000" />
<path d="M723.2 666.5H729.8L726.5 670Z" fill="#fff" shape-rendering="geometricPrecision"/>
<path d="M725 659H728V663H731.2L726.5 668.2L721.8 663H725Z" fill="#0c9c14" shape-rendering="geometricPrecision"/>
<rect x="767" y="643" width="32" height="32" fill="#000" />
<rect x="768" y="644" width="30" height="30" fill="#fff" />
<rect x="770.5" y="645.5" width="8" height="6" rx="1" fill="#fff" stroke="#000" stroke-width="1" shape-rendering="geometricPrecision"/>

<rect x="772" y="647" width="5" height="3" fill="url(#scr)" />
<rect x="770.5" y="652.5" width="8" height="2" rx="0.5" fill="#fff" stroke="#000" stroke-width="1" shape-rendering="geometricPrecision"/>
<text x="781.3" y="653" font-size="9.5" fill="#000" textLength="15.8" lengthAdjust="spacingAndGlyphs" font-weight="bold" font-family="'DejaVu Sans Mono','Liberation Mono',monospace" stroke="#000" stroke-width="0.3">OPC</text>
<rect x="775.5" y="657.5" width="11" height="7" rx="1" fill="#ffffc6" stroke="#000" stroke-width="1" shape-rendering="geometricPrecision"/>
<path d="M789 668.5L793.8 671.6" fill="none" stroke="#000" stroke-width="2.2" shape-rendering="geometricPrecision" stroke-linecap="round"/>
<defs><linearGradient id="mag" x1="0" y1="0" x2="1" y2="1"><stop offset="0" stop-color="#f0f0e0"/><stop offset="0.45" stop-color="#c4c4c4"/><stop offset="1" stop-color="#a8a8a8"/></linearGradient></defs>
<circle cx="786" cy="664.8" r="4.4" fill="url(#mag)" stroke="#5a5a5a" stroke-width="1" shape-rendering="geometricPrecision"/>
<rect x="821" y="643" width="32" height="32" fill="#000" />
<rect x="822" y="644" width="30" height="30" fill="#fff" />
<rect x="824.5" y="645.5" width="8" height="6" rx="1" fill="#fff" stroke="#000" stroke-width="1" shape-rendering="geometricPrecision"/>

<rect x="826" y="647" width="5" height="3" fill="url(#scr)" />
<rect x="824.5" y="652.5" width="8" height="2" rx="0.5" fill="#fff" stroke="#000" stroke-width="1" shape-rendering="geometricPrecision"/>
<text x="835.3" y="653" font-size="9.5" fill="#000" textLength="15.8" lengthAdjust="spacingAndGlyphs" font-weight="bold" font-family="'DejaVu Sans Mono','Liberation Mono',monospace" stroke="#000" stroke-width="0.3">OPC</text>
<rect x="828" y="664" width="5" height="1" fill="#000" />
<rect x="828" y="666" width="5" height="1" fill="#000" />
<rect x="841" y="664" width="5" height="1" fill="#000" />
<rect x="841" y="666" width="5" height="1" fill="#000" />
<path d="M833.6 662.4L840.4 668.6M840.4 662.4L833.6 668.6" fill="none" stroke="#ff0000" stroke-width="1.5" shape-rendering="geometricPrecision"/>
<rect x="866" y="663" width="32" height="16" fill="#808000" />
<rect x="867" y="664" width="30" height="14" fill="#fff" />
<path fill="#808000" fill-rule="evenodd" d="M869 666H895V676H869Z M870 667V675H894V667Z"/>
<rect x="867" y="665" width="9" height="12" fill="#d9d9b4" />
<rect x="869" y="666" width="7" height="1" fill="#a8a850" />
<rect x="869" y="675" width="7" height="1" fill="#a8a850" />
<rect x="869" y="666" width="1" height="10" fill="#a8a850" />
<path d="M870 667.6L873.4 671L870 674.4Z" fill="#000" shape-rendering="geometricPrecision"/>
<path fill="#808000" fill-rule="evenodd" d="M875 668H880V671H875Z M876 669V670H879V669Z"/>
<rect x="882" y="668" width="3" height="1" fill="#808000" />
<rect x="887" y="667" width="2" height="2" fill="#808000" />
<rect x="874" y="672" width="3" height="2" fill="#8c8c20" />
<rect x="880" y="671" width="4" height="3" fill="#808000" />
<path fill="#808000" fill-rule="evenodd" d="M887 671H890V674H887Z M888 672V673H889V672Z"/>
</g>
</g>
</svg>
</body>
</html>
